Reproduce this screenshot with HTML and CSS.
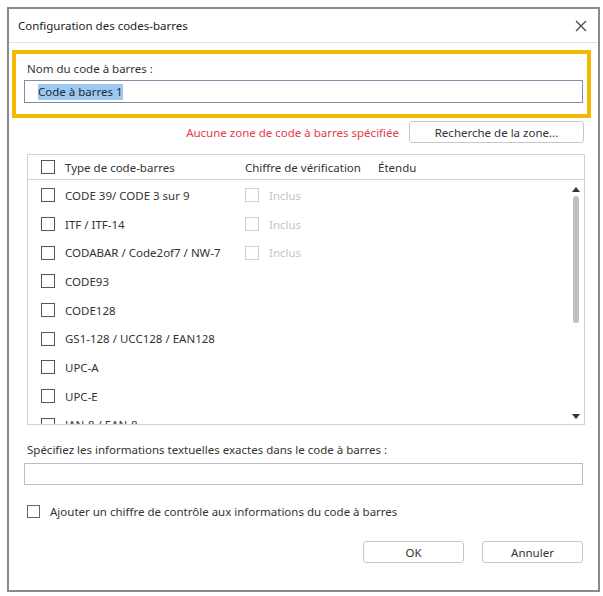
FILE: index.html
```html
<!DOCTYPE html>
<html lang="fr">
<head>
<meta charset="utf-8">
<title>Configuration des codes-barres</title>
<link rel="stylesheet" href="styles.css">
</head>
<body>
<div class="dialog">
  <div class="titlebar">
    <span class="title">Configuration des codes-barres</span>
    <svg class="close" width="12" height="12" viewBox="0 0 12 12"><path d="M1 1 L11 11 M11 1 L1 11" stroke="#444" stroke-width="1.2" fill="none"/></svg>
  </div>
  <div class="content">
    <div class="highlight">
      <div class="label">Nom du code à barres :</div>
      <div class="input name-input"><span class="sel">Code à barres 1</span></div>
    </div>
    <div class="zone-row">
      <span class="warn">Aucune zone de code à barres spécifiée</span>
      <div class="btn zone-btn">Recherche de la zone...</div>
    </div>
    <div class="list">
      <div class="list-head">
        <div class="c1"><span class="cb"></span><span>Type de code-barres</span></div>
        <div class="c2">Chiffre de vérification</div>
        <div class="c3">Étendu</div>
      </div>
      <div class="list-body">
        <div class="rows">
          <div class="row"><div class="c1"><span class="cb"></span><span>CODE 39/ CODE 3 sur 9</span></div><div class="c2 dis"><span class="cb"></span><span>Inclus</span></div></div>
          <div class="row"><div class="c1"><span class="cb"></span><span>ITF / ITF-14</span></div><div class="c2 dis"><span class="cb"></span><span>Inclus</span></div></div>
          <div class="row"><div class="c1"><span class="cb"></span><span>CODABAR / Code2of7 / NW-7</span></div><div class="c2 dis"><span class="cb"></span><span>Inclus</span></div></div>
          <div class="row"><div class="c1"><span class="cb"></span><span>CODE93</span></div></div>
          <div class="row"><div class="c1"><span class="cb"></span><span>CODE128</span></div></div>
          <div class="row"><div class="c1"><span class="cb"></span><span>GS1-128 / UCC128 / EAN128</span></div></div>
          <div class="row"><div class="c1"><span class="cb"></span><span>UPC-A</span></div></div>
          <div class="row"><div class="c1"><span class="cb"></span><span>UPC-E</span></div></div>
          <div class="row"><div class="c1"><span class="cb"></span><span>JAN-8 / EAN-8</span></div></div>
        </div>
        <div class="scrollbar">
          <svg width="8" height="5" viewBox="0 0 8 5"><path d="M0 5 L4 0 L8 5 Z" fill="#333"/></svg>
          <div class="track"><div class="thumb"></div></div>
          <svg width="8" height="5" viewBox="0 0 8 5"><path d="M0 0 L4 5 L8 0 Z" fill="#333"/></svg>
        </div>
      </div>
    </div>
    <div class="label text-label">Spécifiez les informations textuelles exactes dans le code à barres :</div>
    <div class="input text-input"></div>
    <div class="check-row"><span class="cb"></span><span>Ajouter un chiffre de contrôle aux informations du code à barres</span></div>
    <div class="buttons">
      <div class="btn">OK</div>
      <div class="btn">Annuler</div>
    </div>
  </div>
</div>
</body>
</html>
```
FILE: styles.css
```css
* { box-sizing: border-box; }
html, body { margin: 0; padding: 0; background: #fff; }
body {
  font-family: "Noto Sans", "Open Sans", sans-serif;
  font-size: 11.5px;
  color: #333;
}
.dialog {
  margin: 7px 0 0 7px;
  width: 593px;
  height: 585px;
  border: 2px solid #8a8a8a;
  display: flex;
  flex-direction: column;
  background: #fff;
}
.titlebar {
  height: 34px;
  border-bottom: 1px solid #e2e2e2;
  display: flex;
  align-items: center;
  justify-content: space-between;
  padding: 0 11px 0 9px;
  flex-shrink: 0;
}
.title { color: #222; }
.content {
  display: flex;
  flex-direction: column;
  padding: 7px 0 0 3px;
}
.highlight {
  width: 579px;
  height: 68px;
  border: 4px solid #f5b800;
  padding: 7px 4px 0 8px;
  display: flex;
  flex-direction: column;
}
.label { padding-left: 3px; line-height: 16px; color: #333; }
.input {
  border: 1px solid #b8bccb;
  background: #fff;
}
.name-input {
  margin-top: 3px;
  height: 23px;
  border-color: #7f8fa8;
  display: flex;
  align-items: center;
  padding-left: 13px;
}
.sel { background: #9dc8ef; color: #1a2a40; line-height: 16px; }
.zone-row {
  display: flex;
  align-items: center;
  justify-content: flex-end;
  gap: 10px;
  padding-right: 14px;
  margin-top: 3px;
  height: 22px;
}
.warn { color: #e33c46; }
.btn {
  border: 1px solid #c8c8c8;
  border-radius: 3px;
  background: #fff;
  display: flex;
  align-items: center;
  justify-content: center;
  height: 22px;
  color: #333;
}
.zone-btn { width: 175px; }
.list {
  margin: 11px 0 0 15px;
  width: 558px;
  height: 271px;
  border: 1px solid #d0d0d0;
  display: flex;
  flex-direction: column;
  overflow: hidden;
}
.list-head {
  height: 25px;
  border-bottom: 1px solid #d4d4d4;
  display: flex;
  align-items: center;
  flex-shrink: 0;
}
.c1 { width: 217px; padding-left: 13px; display: flex; align-items: center; gap: 10px; }
.c2 { width: 133px; display: flex; align-items: center; gap: 10px; }
.c3 { }
.cb {
  width: 14px;
  height: 14px;
  border: 1px solid #555;
  background: #fff;
  flex-shrink: 0;
  display: inline-block;
}
.dis { color: #c4c4c4; }
.dis .cb { border-color: #cfcfcf; }
.list-body { display: flex; flex: 1; min-height: 0; padding-top: 1px; }
.rows { flex: 1; overflow: hidden; }
.row { height: 28.7px; display: flex; align-items: center; }
.scrollbar {
  width: 17px;
  display: flex;
  flex-direction: column;
  align-items: center;
  padding: 6px 0 5px;
}
.track { flex: 1; width: 100%; display: flex; justify-content: center; padding-top: 4px; }
.thumb { width: 6px; height: 127px; background: #bdbdbd; border-radius: 3px; }
.text-label { margin: 17px 0 0 12px; }
.text-input { margin: 5px 0 0 12px; width: 559px; height: 22px; }
.check-row { margin: 19px 0 0 15px; display: flex; align-items: center; gap: 10px; }
.check-row .cb { width: 13px; height: 13px; border-color: #666; }
.buttons {
  display: flex;
  justify-content: flex-end;
  gap: 18px;
  padding-right: 15px;
  margin-top: 22px;
}
.buttons .btn { width: 101px; }
```
